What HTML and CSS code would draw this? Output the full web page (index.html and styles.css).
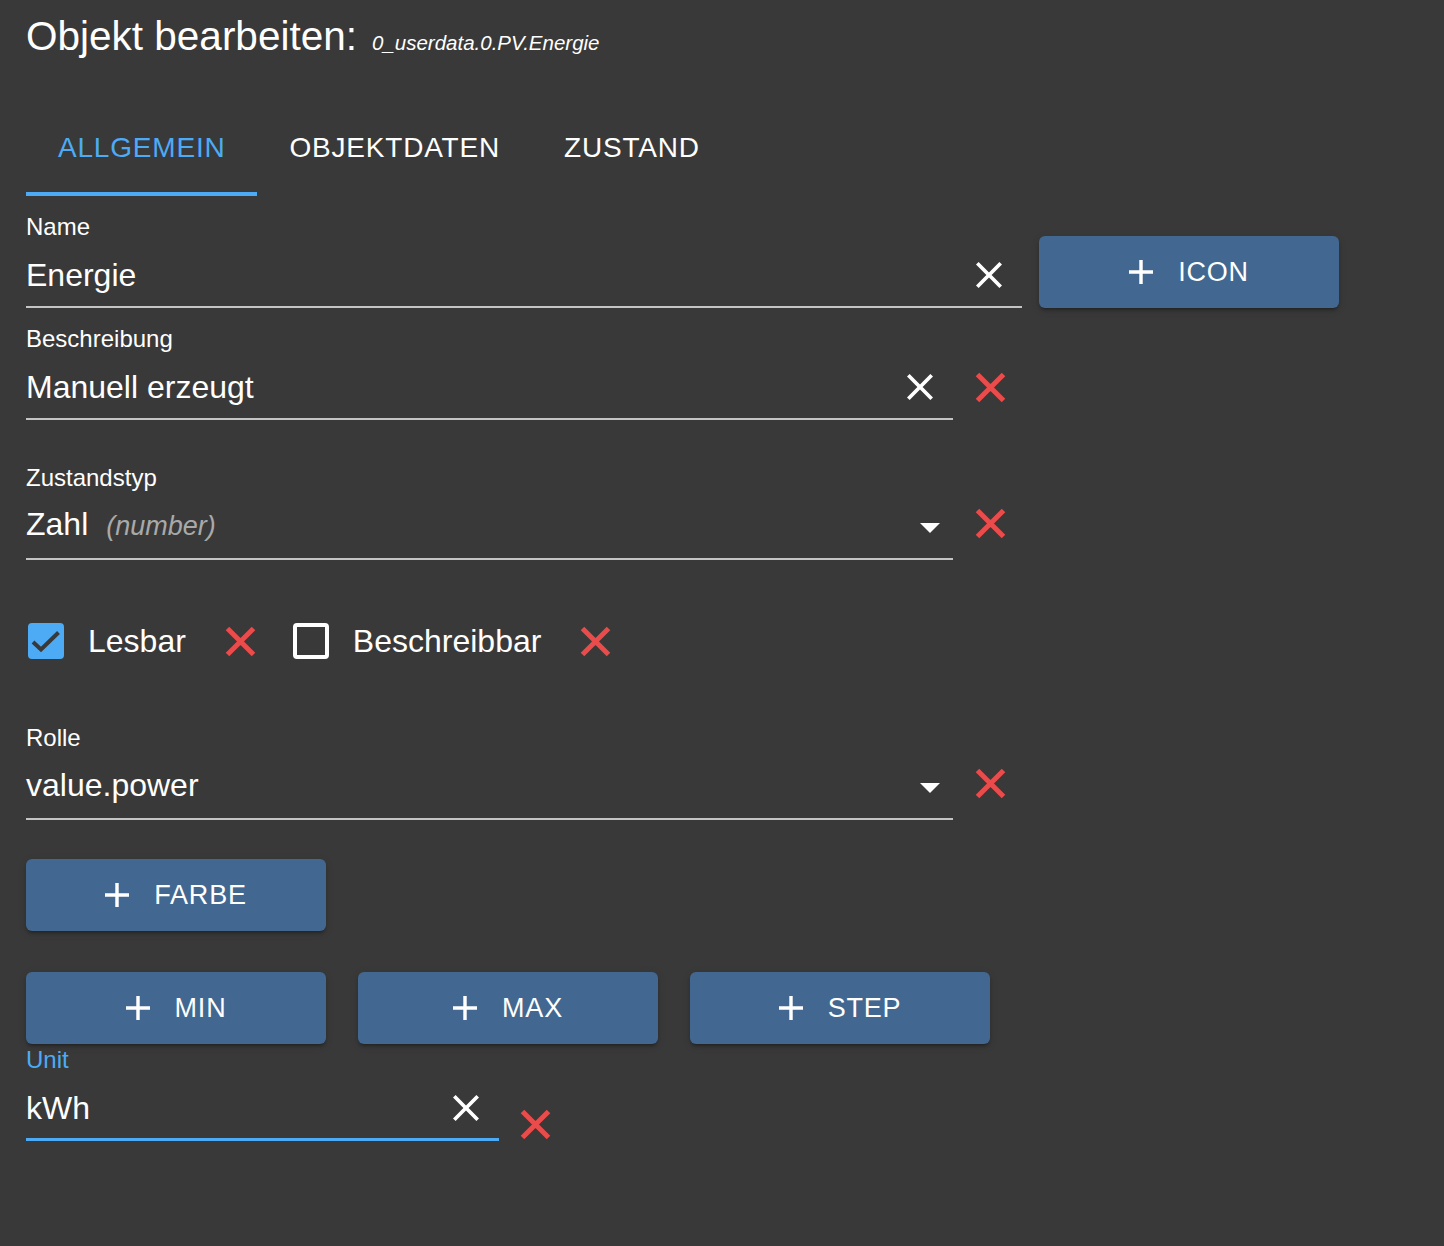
FILE: index.html
```html
<!DOCTYPE html>
<html lang="de">
<head>
    <meta charset="UTF-8">
    <meta name="viewport" content="width=device-width, initial-scale=1.0">
    <title>Objekt bearbeiten</title>
    <link rel="stylesheet" href="styles.css">
</head>
<body>
    <div class="dialog">
        <h1 class="title">Objekt bearbeiten:<span class="object-id">0_userdata.0.PV.Energie</span></h1>

        <div class="tabs">
            <div class="tab active">Allgemein</div>
            <div class="tab">Objektdaten</div>
            <div class="tab">Zustand</div>
        </div>

        <!-- Name + icon -->
        <div class="row row-name">
            <div class="field field-wide">
                <div class="field-label">Name</div>
                <div class="field-input">
                    <span class="field-value">Energie</span>
                    <svg class="clear-icon" viewBox="5 5 14 14"><path d="M19 6.41L17.59 5 12 10.59 6.41 5 5 6.41 10.59 12 5 17.59 6.41 19 12 13.41 17.59 19 19 17.59 13.41 12z"/></svg>
                </div>
            </div>
            <button class="btn btn-icon">
                <svg class="plus-icon" viewBox="5 5 14 14"><path d="M19 13h-6v6h-2v-6H5v-2h6V5h2v6h6v2z"/></svg>
                <span>Icon</span>
            </button>
        </div>

        <!-- Beschreibung -->
        <div class="row row-desc">
            <div class="field field-mid">
                <div class="field-label">Beschreibung</div>
                <div class="field-input">
                    <span class="field-value">Manuell erzeugt</span>
                    <svg class="clear-icon" viewBox="5 5 14 14"><path d="M19 6.41L17.59 5 12 10.59 6.41 5 5 6.41 10.59 12 5 17.59 6.41 19 12 13.41 17.59 19 19 17.59 13.41 12z"/></svg>
                </div>
            </div>
            <svg class="remove-icon remove-text" viewBox="0 0 31 31"><path d="M2.5 2.5L28.5 28.5M28.5 2.5L2.5 28.5"/></svg>
        </div>

        <!-- Zustandstyp -->
        <div class="row row-type">
            <div class="field field-mid">
                <div class="field-label">Zustandstyp</div>
                <div class="field-input select">
                    <span class="field-value">Zahl<span class="hint">(number)</span></span>
                    <svg class="arrow-icon" viewBox="0 0 20 10"><path d="M0 0h20L10 10z"/></svg>
                </div>
            </div>
            <svg class="remove-icon remove-select" viewBox="0 0 31 31"><path d="M2.5 2.5L28.5 28.5M28.5 2.5L2.5 28.5"/></svg>
        </div>

        <!-- Checkboxes -->
        <div class="row check-row">
            <svg class="checkbox checked" viewBox="0 0 36 36">
                <rect x="0" y="0" width="36" height="36" rx="4"/>
                <polyline points="5,19 13,26.5 30.5,9.5"/>
            </svg>
            <span class="check-label">Lesbar</span>
            <svg class="remove-icon remove-check" viewBox="0 0 31 31"><path d="M2.5 2.5L28.5 28.5M28.5 2.5L2.5 28.5"/></svg>
            <div class="checkbox empty"></div>
            <span class="check-label">Beschreibbar</span>
            <svg class="remove-icon remove-check" viewBox="0 0 31 31"><path d="M2.5 2.5L28.5 28.5M28.5 2.5L2.5 28.5"/></svg>
        </div>

        <!-- Rolle -->
        <div class="row row-role">
            <div class="field field-mid">
                <div class="field-label">Rolle</div>
                <div class="field-input select">
                    <span class="field-value">value.power</span>
                    <svg class="arrow-icon" viewBox="0 0 20 10"><path d="M0 0h20L10 10z"/></svg>
                </div>
            </div>
            <svg class="remove-icon remove-select" viewBox="0 0 31 31"><path d="M2.5 2.5L28.5 28.5M28.5 2.5L2.5 28.5"/></svg>
        </div>

        <div class="row row-color">
            <button class="btn">
                <svg class="plus-icon" viewBox="5 5 14 14"><path d="M19 13h-6v6h-2v-6H5v-2h6V5h2v6h6v2z"/></svg>
                <span>Farbe</span>
            </button>
        </div>

        <div class="row row-limits">
            <button class="btn">
                <svg class="plus-icon" viewBox="5 5 14 14"><path d="M19 13h-6v6h-2v-6H5v-2h6V5h2v6h6v2z"/></svg>
                <span>Min</span>
            </button>
            <button class="btn">
                <svg class="plus-icon" viewBox="5 5 14 14"><path d="M19 13h-6v6h-2v-6H5v-2h6V5h2v6h6v2z"/></svg>
                <span>Max</span>
            </button>
            <button class="btn">
                <svg class="plus-icon" viewBox="5 5 14 14"><path d="M19 13h-6v6h-2v-6H5v-2h6V5h2v6h6v2z"/></svg>
                <span>Step</span>
            </button>
        </div>

        <!-- Unit (focused) -->
        <div class="row row-unit">
            <div class="field field-small focused">
                <div class="field-label">Unit</div>
                <div class="field-input">
                    <span class="field-value">kWh</span>
                    <svg class="clear-icon" viewBox="5 5 14 14"><path d="M19 6.41L17.59 5 12 10.59 6.41 5 5 6.41 10.59 12 5 17.59 6.41 19 12 13.41 17.59 19 19 17.59 13.41 12z"/></svg>
                </div>
            </div>
            <svg class="remove-icon remove-unit" viewBox="0 0 31 31"><path d="M2.5 2.5L28.5 28.5M28.5 2.5L2.5 28.5"/></svg>
        </div>
    </div>
</body>
</html>
```

FILE: styles.css
```css
body {
    margin: 0;
    padding: 0;
    background: #393939;
    color: #fff;
    font-family: 'Liberation Sans', Arial, sans-serif;
}
.dialog {
    padding: 12px 26px 60px;
}
.title {
    margin: 0;
    height: 48px;
    font-size: 40.5px;
    line-height: 48px;
    font-weight: normal;
}
.object-id {
    font-size: 20.5px;
    line-height: 1;
    font-style: italic;
    margin-left: 15px;
}

/* tabs */
.tabs {
    display: flex;
    margin-top: 40px;
}
.tab {
    height: 96px;
    box-sizing: border-box;
    padding: 4px 32px 0;
    border-bottom: 4px solid transparent;
    display: flex;
    align-items: center;
    font-size: 28px;
    letter-spacing: 0.8px;
    text-transform: uppercase;
    color: #fff;
    cursor: pointer;
}
.tab.active {
    color: #4dabf5;
    border-bottom-color: #4dabf5;
}

/* rows */
.row {
    display: flex;
    align-items: flex-start;
}
.row-name { margin-top: 17px; }
.row-desc { margin-top: 17px; }
.row-type { margin-top: 44px; }
.check-row {
    margin-top: 57px;
    height: 48px;
    align-items: center;
}
.row-role { margin-top: 59px; }
.row-color { margin-top: 39px; }
.row-limits {
    margin-top: 41px;
    gap: 32px;
}
.row-unit { margin-top: 2px; }

/* text fields */
.field {
    display: flex;
    flex-direction: column;
}
.field-wide { width: 996px; }
.field-mid { width: 927px; }
.field-small { width: 473px; }
.field-label {
    font-size: 24px;
    line-height: 28px;
}
.field-input {
    display: flex;
    align-items: center;
    justify-content: space-between;
    height: 40px;
    margin-top: 14px;
    padding-bottom: 11px;
    border-bottom: 2px solid #c4c4c4;
}
.field-input.select {
    margin-top: 13px;
    padding-bottom: 13px;
}
.field-value {
    font-size: 32px;
    line-height: 40px;
    white-space: nowrap;
}
.hint {
    font-size: 27px;
    font-style: italic;
    color: #a9a9a9;
    margin-left: 18px;
}
.focused .field-label { color: #4dabf5; }
.focused .field-input {
    padding-bottom: 10px;
    border-bottom: 3px solid #4dabf5;
}

.clear-icon {
    width: 26px;
    height: 26px;
    margin-right: 20px;
    fill: #fff;
    flex-shrink: 0;
}
.arrow-icon {
    width: 20px;
    height: 10px;
    margin-right: 13px;
    margin-top: 6px;
    fill: #fff;
}

/* red remove icons */
.remove-icon {
    width: 31px;
    height: 31px;
    fill: none;
    stroke: #ea4b4b;
    stroke-width: 5;
    flex-shrink: 0;
}
.remove-text {
    margin-left: 22px;
    margin-top: 47px;
}
.remove-select {
    margin-left: 22px;
    margin-top: 44px;
}
.remove-check {
    margin-left: 39px;
}
.remove-unit {
    margin-left: 21px;
    margin-top: 63px;
}

/* checkboxes */
.checkbox {
    width: 36px;
    height: 36px;
    box-sizing: border-box;
    flex-shrink: 0;
}
.checkbox.checked {
    margin-left: 2px;
}
.checkbox.checked rect {
    fill: #4dabf5;
}
.checkbox.checked polyline {
    fill: none;
    stroke: #393939;
    stroke-width: 4;
}
.checkbox.empty {
    margin-left: 37px;
    border: 4px solid #fff;
    border-radius: 4px;
}
.check-label {
    font-size: 32px;
    margin-left: 24px;
}

/* buttons */
.btn {
    width: 300px;
    height: 72px;
    display: flex;
    align-items: center;
    justify-content: center;
    gap: 25px;
    padding: 0;
    border: none;
    border-radius: 6px;
    background: #426891;
    color: #fff;
    font-family: inherit;
    font-size: 27px;
    letter-spacing: 0.8px;
    text-transform: uppercase;
    box-shadow: 0 4px 2px -3px rgba(0,0,0,0.2), 0 3px 3px 0 rgba(0,0,0,0.14), 0 2px 8px 0 rgba(0,0,0,0.12);
    cursor: pointer;
}
.btn-icon {
    align-self: flex-end;
    margin-left: 17px;
}
.plus-icon {
    width: 24px;
    height: 24px;
    fill: #fff;
}
```
